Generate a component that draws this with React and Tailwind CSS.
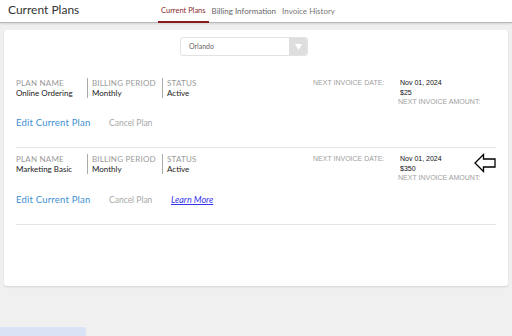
const plans = [
    { name: "Online Ordering", period: "Monthly", status: "Active", date: "Nov 01, 2024", amount: "$25", learnMore: false },
    { name: "Marketing Basic", period: "Monthly", status: "Active", date: "Nov 01, 2024", amount: "$350", learnMore: true },
];

function ArrowLeft() {
    return (
        <svg width="22" height="20" viewBox="0 0 22 20" className="absolute right-0 -top-[1px]">
            <path d="M1 10 L9.5 1.5 L9.5 6 L21 6 L21 14 L9.5 14 L9.5 18.5 Z" fill="white" stroke="black" strokeWidth="1.3" strokeLinejoin="miter" />
        </svg>
    );
}

function PlanRow({ plan, first }) {
    return (
        <div className={first ? "" : "border-t border-[#e6e6e6]"}>
            <div className={`relative flex ${first ? "mt-[22px]" : "mt-[6px]"}`}>
                <div className="flex w-[297px]">
                    <div className="w-[71px] h-[20px]">
                        <div className="text-[8px] leading-[10px] text-[#9a9a9a] tracking-[0.2px]">PLAN NAME</div>
                        <div className="text-[8px] leading-[10px] text-[#222]">{plan.name}</div>
                    </div>
                    <div className="w-[75px] border-l border-[#aaa] pl-[4px] h-[20px]">
                        <div className="text-[8px] leading-[10px] text-[#9a9a9a] tracking-[0.2px]">BILLING PERIOD</div>
                        <div className="text-[8px] leading-[10px] text-[#222]">{plan.period}</div>
                    </div>
                    <div className="border-l border-[#aaa] pl-[4px] h-[20px]">
                        <div className="text-[8px] leading-[10px] text-[#9a9a9a] tracking-[0.2px]">STATUS</div>
                        <div className="text-[8px] leading-[10px] text-[#222]">{plan.status}</div>
                    </div>
                </div>
                <div className="flex font-['Liberation_Sans',Arial,sans-serif] text-[7px]">
                    <div className="w-[87px] leading-[10px] text-[#a0a0a0]">NEXT INVOICE DATE:</div>
                    <div className="leading-[10px]">
                        <div className="text-[#111]">{plan.date}</div>
                        <div className="text-[#111]">{plan.amount}</div>
                        <div className="text-[#a0a0a0] -ml-[2px] leading-[8px]">NEXT INVOICE AMOUNT:</div>
                    </div>
                </div>
                {plan.learnMore && <ArrowLeft />}
            </div>
            <div className={`flex items-center ${first ? "mt-[11px]" : "mt-[12px]"} mb-[18px] h-[12px]`}>
                <span className="text-[9.5px] text-[#3b8fd3] w-[93px] tracking-[0.2px]">Edit Current Plan</span>
                <span className="text-[8.5px] text-[#a8a8a8] w-[62px]">Cancel Plan</span>
                {plan.learnMore && (
                    <span className="text-[9px] italic underline text-[#3434ee]">Learn More</span>
                )}
            </div>
        </div>
    );
}

export default function App() {
    return (
        <div className="w-[512px] h-[336px] bg-[#f0f0f0] relative overflow-hidden font-['Lato','Noto_Sans',sans-serif]">
            <div className="h-[23px] bg-white border-b border-[#b8b8b8] shadow-[0_1px_2px_rgba(0,0,0,0.12)] flex items-start">
                <div className="pl-[8px] pt-[2px] text-[12px] leading-[16px] text-[#333] w-[150px]">Current Plans</div>
                <div className="flex ml-[8px] h-full">
                    <div className="px-[3px] pt-[5px] text-[7.5px] text-[#8a2c2c] border-b-2 border-[#8b1a1a] h-[23px]">Current Plans</div>
                    <div className="px-[3px] pt-[5px] text-[8px] text-[#666]">Billing Information</div>
                    <div className="px-[3px] pt-[5px] text-[8px] text-[#777]">Invoice History</div>
                </div>
            </div>

            <div className="mx-[4px] mt-[7px] h-[256px] bg-white rounded-[3px] shadow-[0_1px_2px_rgba(0,0,0,0.12)] px-[12px] pt-[7px]">
                <div className="ml-[164px] w-[128px] h-[19px] flex border border-[#e2e2e2] rounded-[3px] overflow-hidden">
                    <div className="flex-1 pl-[8px] text-[7px] leading-[17px] text-[#666]">Orlando</div>
                    <div className="w-[18px] bg-[#dedede] flex items-center justify-center">
                        <svg width="7" height="6" viewBox="0 0 7 6"><path d="M0 0 H7 L3.5 6 Z" fill="white" /></svg>
                    </div>
                </div>
                {plans.map((plan, i) => (
                    <PlanRow key={plan.name} plan={plan} first={i === 0} />
                ))}
                <div className="border-t border-[#e6e6e6]" />
            </div>

            <div className="absolute left-0 bottom-0 w-[86px] h-[9px] bg-[#d9e3f5] rounded-tr-[2px]" />
        </div>
    );
}
